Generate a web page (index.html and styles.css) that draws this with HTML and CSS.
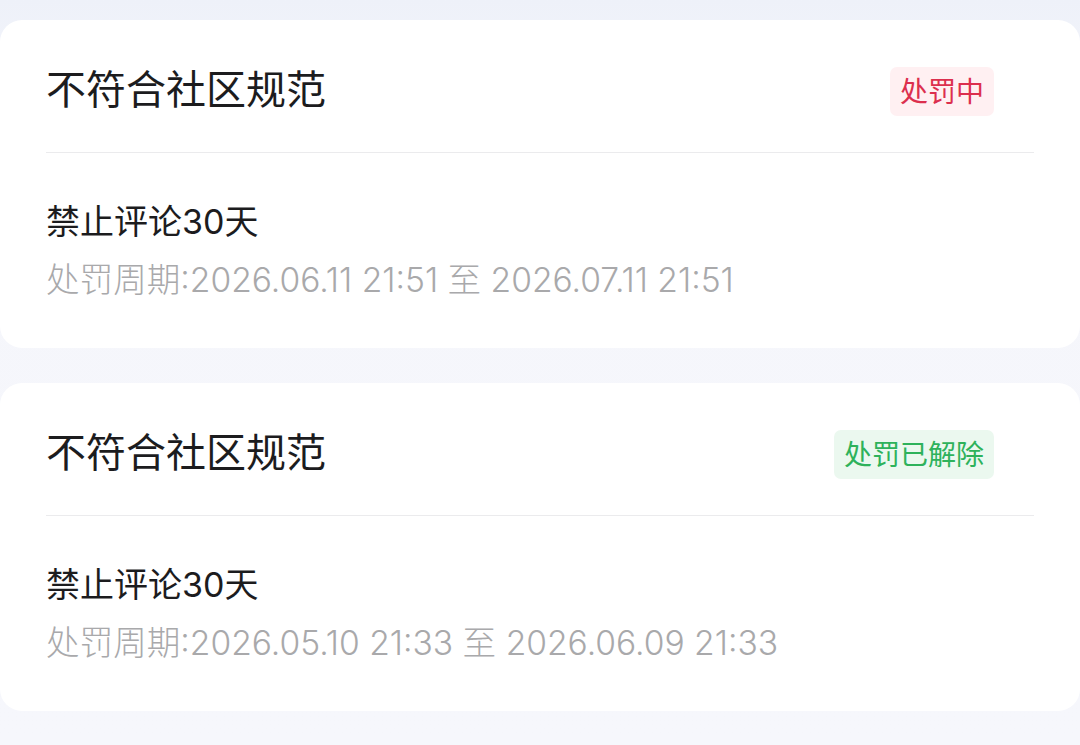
FILE: index.html
```html
<!DOCTYPE html>
<html lang="zh-CN">
<head>
<meta charset="utf-8">
<link rel="stylesheet" href="styles.css">
</head>
<body>
<main class="list">
  <section class="card">
    <div class="card-head">
      <h2 class="title">不符合社区规范</h2>
      <span class="badge badge-active">处罚中</span>
    </div>
    <div class="divider"></div>
    <div class="card-body">
      <p class="action">禁止评论30天</p>
      <p class="period">处罚周期:2026.06.11 21:51 至 2026.07.11 21:51</p>
    </div>
  </section>
  <section class="card">
    <div class="card-head">
      <h2 class="title">不符合社区规范</h2>
      <span class="badge badge-done">处罚已解除</span>
    </div>
    <div class="divider"></div>
    <div class="card-body">
      <p class="action">禁止评论30天</p>
      <p class="period">处罚周期:2026.05.10 21:33 至 2026.06.09 21:33</p>
    </div>
  </section>
</main>
</body>
</html>
```
FILE: styles.css
```css
html, body {
  margin: 0;
  padding: 0;
}
body {
  width: 1080px;
  height: 745px;
  overflow: hidden;
  background: linear-gradient(180deg, #eef1f9 0px, #f5f6fb 120px, #f6f7fc 100%);
  font-family: "Noto Sans CJK SC", "Noto Sans", sans-serif;
}
.list {
  display: flex;
  flex-direction: column;
  gap: 35px;
  padding-top: 20px;
}
.card {
  background: #ffffff;
  border-radius: 22px;
  height: 328px;
  display: flex;
  flex-direction: column;
}
.card-head {
  display: flex;
  align-items: center;
  justify-content: space-between;
  padding: 47px 86px 36px 46px;
  height: 49px;
}
.title {
  margin: 0;
  font-size: 40px;
  font-weight: 400;
  color: #1c1c1e;
  line-height: 49px;
  padding-bottom: 8px;
}
.badge {
  font-size: 28px;
  line-height: 47px;
  height: 49px;
  padding: 0 10px;
  border-radius: 7px;
  box-sizing: border-box;
}
.badge-active {
  background: #fff0f2;
  color: #dc2f4e;
}
.badge-done {
  background: #ebf8ef;
  color: #2eb25b;
}
.divider {
  height: 1px;
  background: #ebebed;
  margin: 0 46px;
}
.card-body {
  padding: 40px 46px 0;
}
.action, .period {
  margin: 0;
  line-height: 58px;
  height: 58px;
  white-space: nowrap;
  font-family: "Inter", "Noto Sans CJK SC", sans-serif;
  font-weight: 300;
}
.action {
  font-size: 34px;
  font-weight: 400;
  color: #1c1c1e;
}
.period {
  font-size: 33.6px;
  color: #a9a9ab;
}
```
